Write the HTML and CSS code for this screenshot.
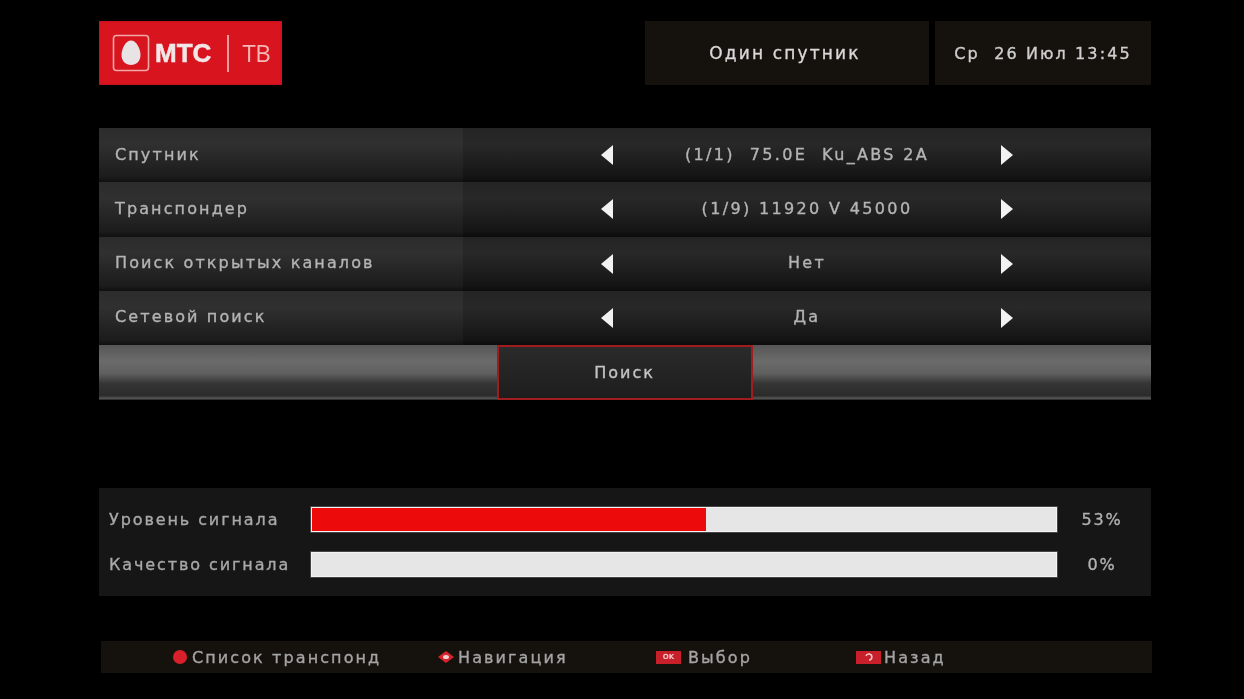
FILE: index.html
```html
<!DOCTYPE html>
<html lang="ru">
<head>
<meta charset="utf-8">
<title>Один спутник</title>
<link rel="stylesheet" href="styles.css">
</head>
<body>
<div class="screen">
  <header class="header">
    <div class="logo">
      <svg class="logo-icon" width="38" height="38" viewBox="0 0 38 38"><rect x="1.500" y="1.500" width="35" height="35" rx="3" fill="#d8141f" stroke="#efa9a6" stroke-width="1.600"/><path d="M19 6.500C24 6.500 28.500 14.500 28.500 21C28.500 27.500 24 31 19 31C14 31 9.500 27.500 9.500 21C9.500 14.500 14 6.500 19 6.500Z" fill="#e8e4e6"/></svg>
      <span class="logo-name">МТС</span>
      <span class="logo-rule"></span>
      <span class="logo-tv">ТВ</span>
    </div>
    <div class="title-box"><span class="soft">Один спутник</span></div>
    <div class="date-box"><span class="soft">Ср&nbsp; 26 Июл 13:45</span></div>
  </header>

  <section class="menu">
    <div class="row">
      <div class="row-label"><span class="soft">Спутник</span></div>
      <div class="row-control">
        <svg class="arrow" width="14" height="22" viewBox="0 0 14 22"><path d="M13 1V21L1 11Z" fill="#f2f2f2"/></svg>
        <div class="row-value"><span class="soft">(1/1)&nbsp; 75.0E&nbsp; Ku_ABS 2A</span></div>
        <svg class="arrow" width="14" height="22" viewBox="0 0 14 22"><path d="M1 1V21L13 11Z" fill="#f2f2f2"/></svg>
      </div>
    </div>
    <div class="row">
      <div class="row-label"><span class="soft">Транспондер</span></div>
      <div class="row-control">
        <svg class="arrow" width="14" height="22" viewBox="0 0 14 22"><path d="M13 1V21L1 11Z" fill="#f2f2f2"/></svg>
        <div class="row-value"><span class="soft">(1/9) 11920 V 45000</span></div>
        <svg class="arrow" width="14" height="22" viewBox="0 0 14 22"><path d="M1 1V21L13 11Z" fill="#f2f2f2"/></svg>
      </div>
    </div>
    <div class="row">
      <div class="row-label"><span class="soft">Поиск открытых каналов</span></div>
      <div class="row-control">
        <svg class="arrow" width="14" height="22" viewBox="0 0 14 22"><path d="M13 1V21L1 11Z" fill="#f2f2f2"/></svg>
        <div class="row-value"><span class="soft">Нет</span></div>
        <svg class="arrow" width="14" height="22" viewBox="0 0 14 22"><path d="M1 1V21L13 11Z" fill="#f2f2f2"/></svg>
      </div>
    </div>
    <div class="row">
      <div class="row-label"><span class="soft">Сетевой поиск</span></div>
      <div class="row-control">
        <svg class="arrow" width="14" height="22" viewBox="0 0 14 22"><path d="M13 1V21L1 11Z" fill="#f2f2f2"/></svg>
        <div class="row-value"><span class="soft">Да</span></div>
        <svg class="arrow" width="14" height="22" viewBox="0 0 14 22"><path d="M1 1V21L13 11Z" fill="#f2f2f2"/></svg>
      </div>
    </div>
    <div class="search-row">
      <div class="search-btn"><span class="soft">Поиск</span></div>
    </div>
  </section>

  <section class="signal">
    <div class="signal-row">
      <div class="signal-label"><span class="soft">Уровень сигнала</span></div>
      <div class="bar"><div class="bar-fill" style="width:53%"></div></div>
      <div class="signal-pct"><span class="soft">53%</span></div>
    </div>
    <div class="signal-row">
      <div class="signal-label"><span class="soft">Качество сигнала</span></div>
      <div class="bar"></div>
      <div class="signal-pct"><span class="soft">0%</span></div>
    </div>
  </section>

  <footer class="footer">
    <div class="hint hint-list">
      <span class="dot"></span><span class="soft">Список транспонд</span>
    </div>
    <div class="hint hint-nav">
      <svg class="diamond" width="16" height="12" viewBox="0 0 16 12"><path d="M8 0L16 6L8 12L0 6Z" fill="#d8232c"/><ellipse cx="8" cy="6" rx="3" ry="2" fill="#f0d0d0"/></svg><span class="soft">Навигация</span>
    </div>
    <div class="hint hint-ok">
      <span class="key"><span class="key-text">OK</span></span><span class="soft">Выбор</span>
    </div>
    <div class="hint hint-back">
      <span class="key"><svg width="10" height="8" viewBox="0 0 10 8"><path d="M2 3A3 3 0 1 1 5 7" fill="none" stroke="#f0c8c8" stroke-width="1.600"/></svg></span><span class="soft">Назад</span>
    </div>
  </footer>
</div>
</body>
</html>
```
FILE: styles.css
```css
* { box-sizing: border-box; }
html, body { margin: 0; height: 100%; background: #000; overflow: hidden; }
body { font-family: "DejaVu Sans", "Noto Sans", sans-serif; color: #d6d6d6; }
.soft { filter: blur(0.6px); display: inline-block; white-space: nowrap; -webkit-text-stroke: 0.35px currentColor; }
.screen { width: 1244px; height: 699px; padding: 21px 93px 0 99px; display: flex; flex-direction: column; }

.header { display: flex; height: 64px; }
.logo { width: 183px; background: #d8141f; display: flex; align-items: center; padding-left: 13px; box-shadow: inset 0 0 2px #a01018; }
.logo-icon { flex: none; filter: blur(0.5px); }
.logo-name { margin-left: 5px; font: 700 26px/1 "Liberation Sans", sans-serif; color: #f3e6e6; width: 59px; filter: blur(0.5px); -webkit-text-stroke: 0.5px #f3e6e6; }
.logo-rule { margin-left: 13px; width: 1.500px; height: 37px; background: #eb9c9c; }
.logo-tv { margin-left: 14px; font: 400 24px/1 "Open Sans", sans-serif; color: #f5b9b6; filter: blur(0.5px); letter-spacing: -0.5px; }
.title-box { margin-left: 363px; width: 284px; background: #15120e; display: flex; align-items: center; justify-content: center; font-size: 17px; letter-spacing: 2.150px; color: #d8d8d8; padding-right: 4px; }
.date-box { margin-left: 6px; width: 216px; background: #15120e; display: flex; align-items: center; justify-content: center; font-size: 16px; letter-spacing: 2.100px; color: #cfcfcf; }

.menu { margin-top: 43px; width: 1052px; display: flex; flex-direction: column; }
.row { height: 54.250px; display: flex; background: linear-gradient(#242424 0, #282828 30%, #1e1e1e 62%, #141414 90%, #0c0c0c 100%); }
.row-label { width: 364px; padding: 0 0 2px 16px; display: flex; align-items: center; font-size: 16px; letter-spacing: 2.120px; color: #b4b4b4; background: linear-gradient(#2c2c2c 0, #303030 30%, #252525 62%, #1c1c1c 90%, #101010 100%); }
.row-control { flex: 1; display: flex; align-items: center; padding-left: 137px; }
.arrow { flex: none; }
.row-value { width: 386px; text-align: center; font-size: 16px; letter-spacing: 2.350px; color: #b4b4b4; padding-bottom: 2px; }

.search-row { height: 55px; display: flex; justify-content: center; padding-right: 1px; background: linear-gradient(#565656 0, #6b6b6b 30%, #5f5f5f 52%, #353535 70%, #2b2b2b 92%, #555 97%, #222 100%); }
.search-btn { width: 256px; border: 2px solid #a01c1e; background: linear-gradient(#2b2b2b, #1d1d1d); display: flex; align-items: center; justify-content: center; font-size: 16px; letter-spacing: 2px; color: #c4c4c4; }

.signal { margin-top: 88px; width: 1052px; height: 108px; background: #161616; padding: 19px 0 0 10px; display: flex; flex-direction: column; gap: 20px; }
.signal-row { height: 25px; display: flex; align-items: center; }
.signal-label { width: 202px; font-size: 16px; letter-spacing: 1.900px; color: #a8a8a8; }
.bar { width: 746px; height: 25px; background: #e6e6e6; border: 1px solid #f4f4f4; box-shadow: 0 0 0 1px #444; }
.bar-fill { height: 100%; background: #ec0a0a; }
.signal-pct { flex: 1; text-align: center; font-size: 16px; letter-spacing: 1.800px; color: #b0b0b0; padding-right: 4px; }

.footer { margin-top: 45px; margin-left: 2px; width: 1051px; height: 32px; background: #15120e; padding-left: 72px; display: flex; align-items: center; font-size: 16px; letter-spacing: 2.100px; color: #a4a4a4; }
.hint { display: flex; align-items: center; }
.hint-list { width: 265px; }
.hint-nav { width: 218px; }
.hint-ok { width: 200px; }
.dot { width: 14px; height: 14px; border-radius: 50%; background: #d8202a; margin-right: 5px; filter: blur(0.5px); }
.diamond { margin-right: 4px; filter: blur(0.5px); }
.key { width: 25px; height: 13px; background: #c8202a; display: flex; align-items: center; justify-content: center; margin-right: 7px; filter: blur(0.5px); }
.key-text { font-size: 7px; font-weight: 700; line-height: 1; letter-spacing: 0; color: #f0c8c8; }
.hint-back .key { margin-right: 3px; }
```
